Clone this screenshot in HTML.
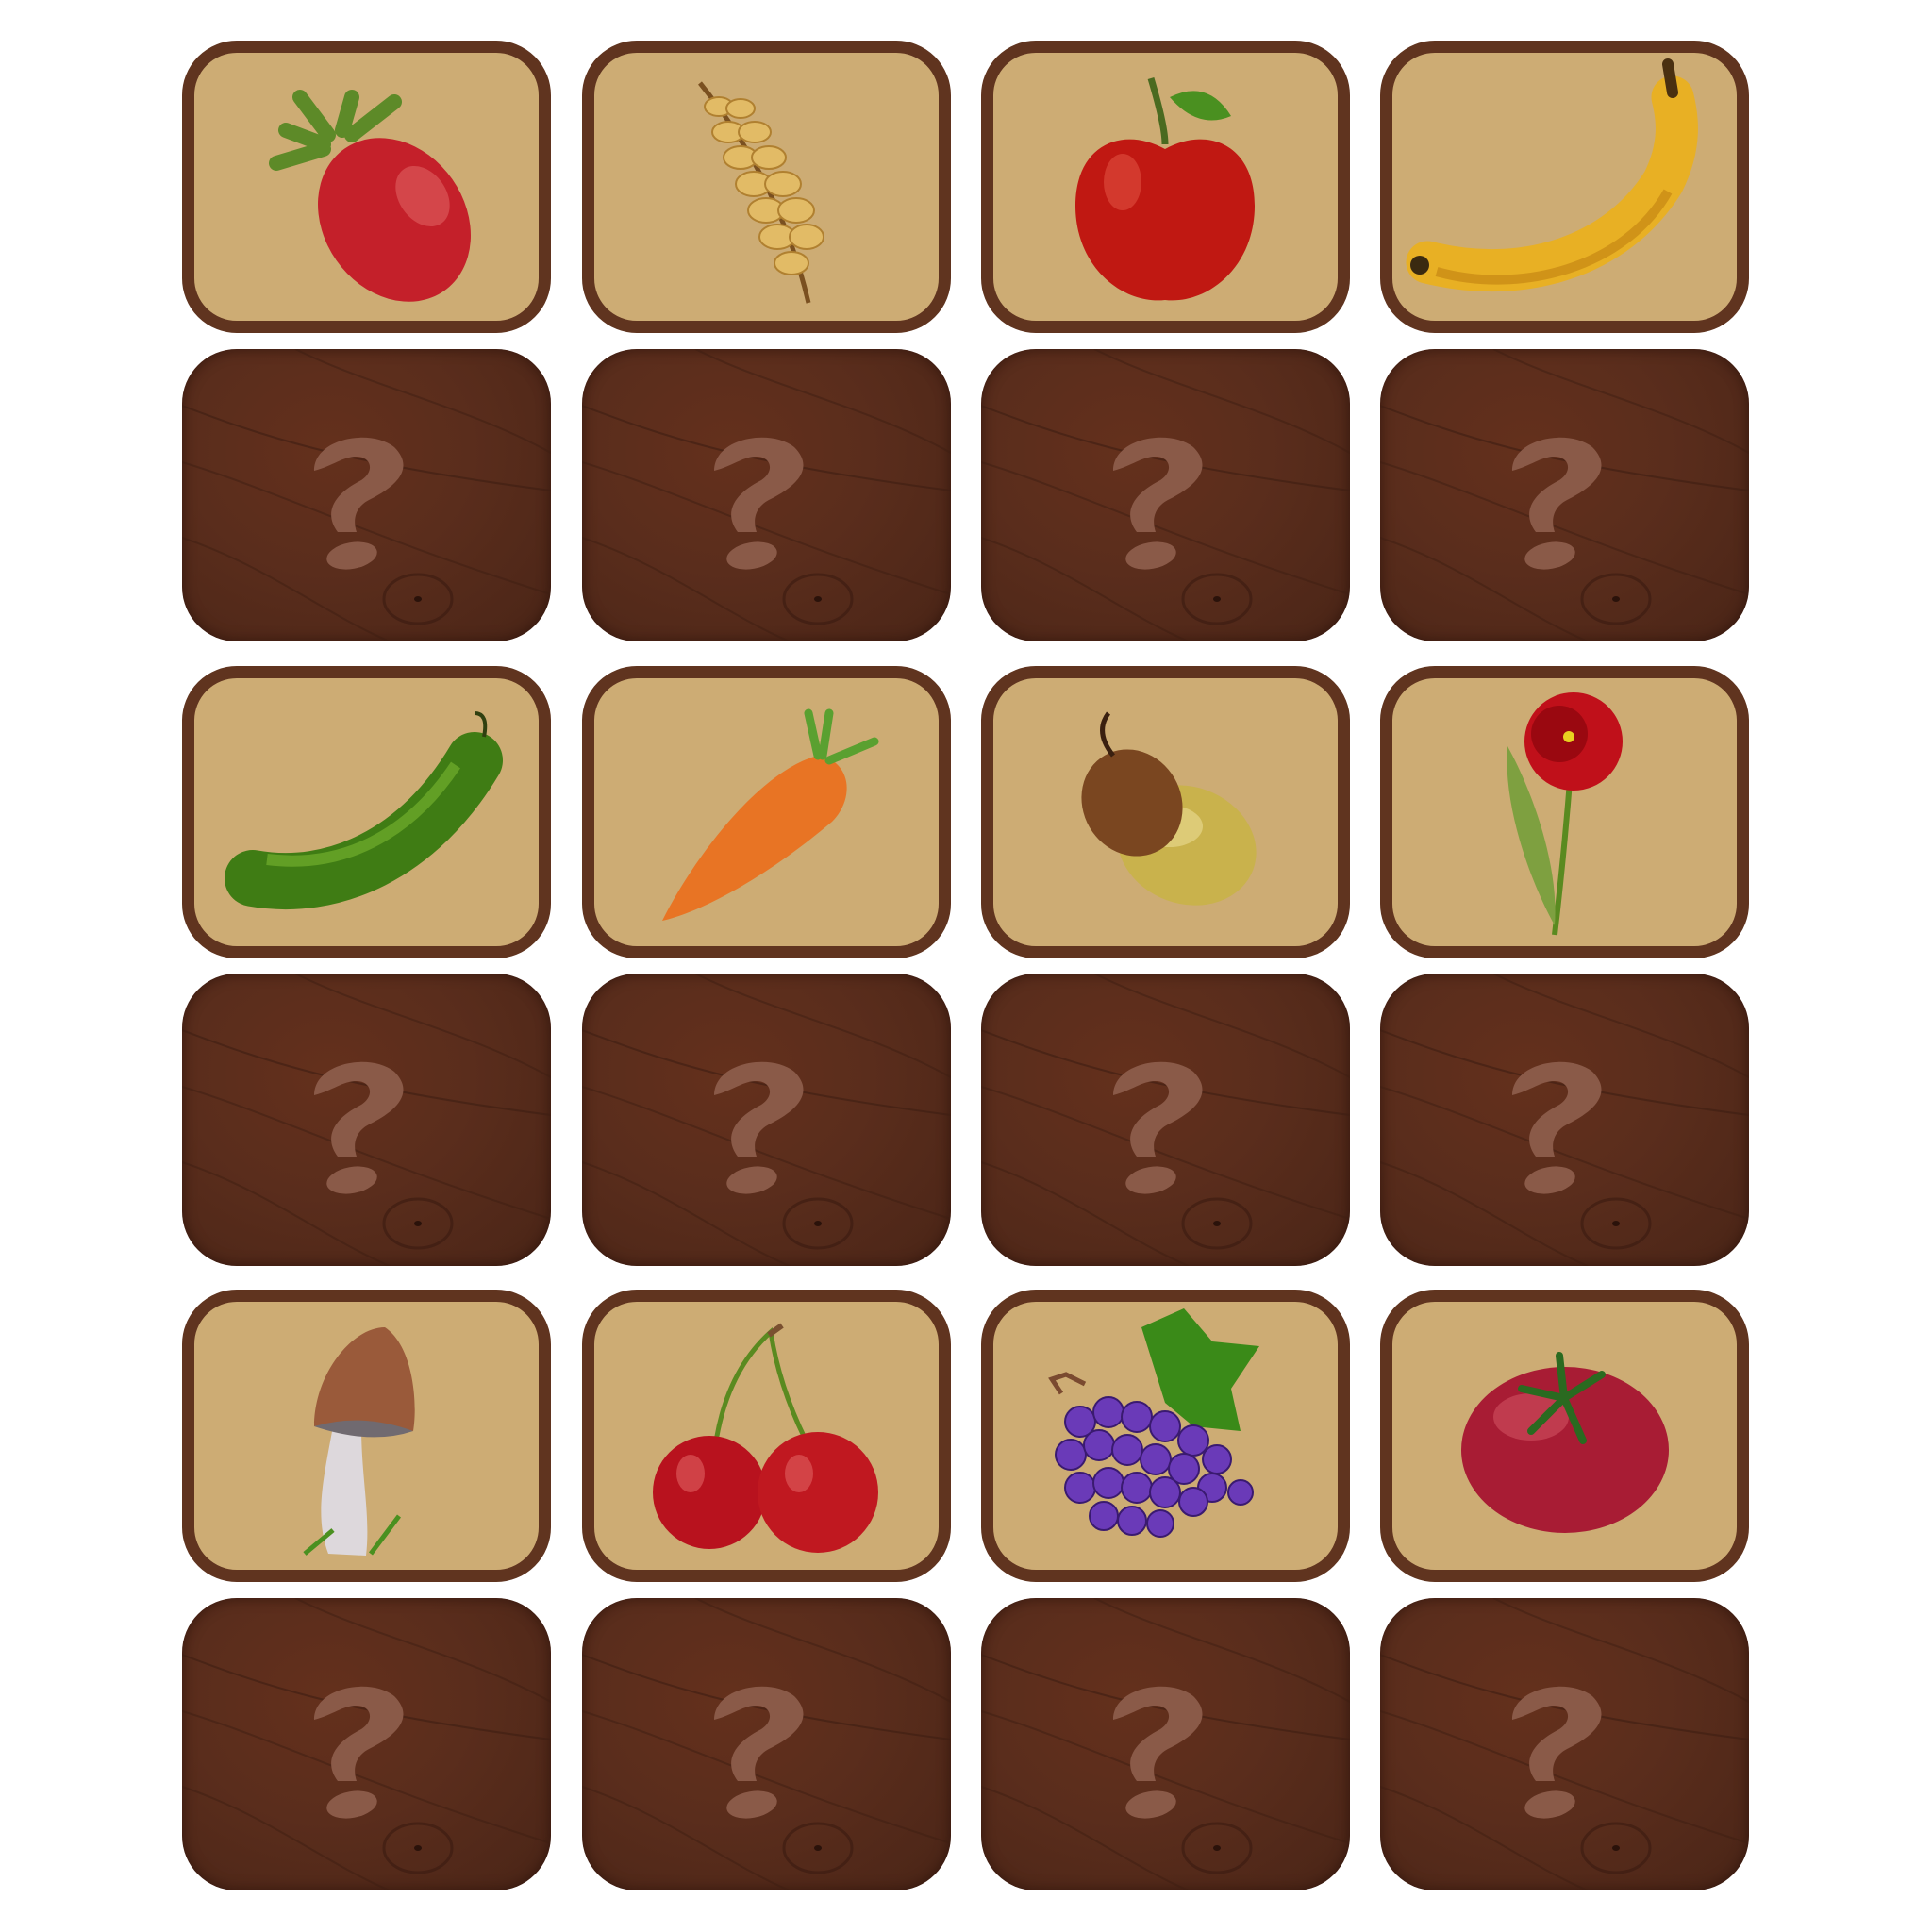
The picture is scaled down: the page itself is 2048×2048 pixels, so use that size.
<!DOCTYPE html>
<html><head><meta charset="utf-8"><style>
body{margin:0;width:2048px;height:2048px;background:#fff;position:relative;overflow:hidden;font-family:"Liberation Serif",serif}
.c{position:absolute;width:391px;height:310px;box-sizing:border-box;border-radius:58px}
.f{background:#cdac74;border:13px solid #60341f}
.f svg{position:absolute;left:-13px;top:-13px}
.b{background:radial-gradient(ellipse at 40% 35%,#64301c 0%,#5a2d1c 45%,#4a2517 100%);box-shadow:inset 0 0 14px rgba(30,10,5,.6);overflow:hidden}
.b svg{position:absolute;left:0;top:0}
</style></head><body>
<svg width="0" height="0" style="position:absolute"><defs>
<g id="back">
<path d="M0 60 C80 90 160 120 391 150" stroke="#3e1e12" stroke-width="2" fill="none" opacity=".6"/>
<path d="M0 120 C100 150 200 200 391 260" stroke="#3e1e12" stroke-width="2" fill="none" opacity=".5"/>
<path d="M120 0 C200 40 300 60 391 110" stroke="#3e1e12" stroke-width="2" fill="none" opacity=".5"/>
<path d="M0 200 C90 230 150 280 220 310" stroke="#3e1e12" stroke-width="2" fill="none" opacity=".5"/>
<ellipse cx="250" cy="265" rx="36" ry="26" fill="none" stroke="#3a1b10" stroke-width="3" opacity=".6"/>
<ellipse cx="250" cy="265" rx="4" ry="3" fill="#2a120a"/>
<g transform="translate(0,14)">
<path d="M140 115 C140 80 200 70 225 90 C250 115 220 135 200 145 C185 152 180 165 185 180 L165 180 C150 160 160 140 190 125 C205 115 200 100 185 100 C170 100 160 110 140 115Z" fill="#8a5a48"/>
<ellipse cx="180" cy="205" rx="27" ry="14" transform="rotate(-10 180 205)" fill="#8a5a48"/>
</g>
</g></defs></svg>

<!-- Row 1 -->
<div class="c f" style="left:193px;top:43px"><svg width="391" height="310">
<path d="M150 110 L110 95 M155 100 L125 60 M170 95 L180 60 M180 100 L225 65 M150 115 L100 130" stroke="#5d8a28" stroke-width="16" stroke-linecap="round"/>
<ellipse cx="225" cy="190" rx="75" ry="92" transform="rotate(-35 225 190)" fill="#c4202a"/>
<ellipse cx="255" cy="165" rx="25" ry="35" transform="rotate(-35 255 165)" fill="#e06060" opacity=".6"/>
</svg></div>
<div class="c f" style="left:617px;top:43px"><svg width="391" height="310">
<path d="M125 45 Q210 150 240 278" stroke="#7a5020" stroke-width="5" fill="none"/>
<g fill="#e2bb66" stroke="#b08030" stroke-width="2">
<ellipse cx="145" cy="70" rx="15" ry="10"/><ellipse cx="168" cy="72" rx="15" ry="10"/>
<ellipse cx="155" cy="97" rx="17" ry="11"/><ellipse cx="183" cy="97" rx="17" ry="11"/>
<ellipse cx="168" cy="124" rx="18" ry="12"/><ellipse cx="198" cy="124" rx="18" ry="12"/>
<ellipse cx="182" cy="152" rx="19" ry="13"/><ellipse cx="213" cy="152" rx="19" ry="13"/>
<ellipse cx="195" cy="180" rx="19" ry="13"/><ellipse cx="227" cy="180" rx="19" ry="13"/>
<ellipse cx="207" cy="208" rx="19" ry="13"/><ellipse cx="238" cy="208" rx="18" ry="13"/>
<ellipse cx="222" cy="236" rx="18" ry="12"/></g></svg></div>
<div class="c f" style="left:1040px;top:43px"><svg width="391" height="310">
<path d="M180 40 Q195 90 195 110 " stroke="#4a6a20" stroke-width="7" fill="none"/>
<path d="M200 60 Q240 40 265 80 Q230 95 200 60Z" fill="#4a9020"/>
<path d="M195 115 C150 90 100 110 100 175 C100 240 150 280 195 275 C240 280 290 240 290 175 C290 110 240 90 195 115Z" fill="#c01812"/>
<ellipse cx="150" cy="150" rx="20" ry="30" fill="#e05040" opacity=".6"/></svg></div>
<div class="c f" style="left:1463px;top:43px"><svg width="391" height="310">
<path d="M50 235 C150 260 250 230 300 150 C320 110 315 80 310 60" stroke="#e8b024" stroke-width="45" fill="none" stroke-linecap="round"/>
<path d="M60 245 C150 270 260 240 305 160" stroke="#c08010" stroke-width="10" fill="none" opacity=".6"/>
<path d="M310 55 L305 25" stroke="#4a3010" stroke-width="12" stroke-linecap="round"/>
<circle cx="42" cy="238" r="10" fill="#3a2a10"/></svg></div>

<!-- Row 2 backs -->
<div class="c b" style="left:193px;top:370px"><svg width="391" height="310"><use href="#back"/></svg></div>
<div class="c b" style="left:617px;top:370px"><svg width="391" height="310"><use href="#back"/></svg></div>
<div class="c b" style="left:1040px;top:370px"><svg width="391" height="310"><use href="#back"/></svg></div>
<div class="c b" style="left:1463px;top:370px"><svg width="391" height="310"><use href="#back"/></svg></div>

<!-- Row 3 -->
<div class="c f" style="left:193px;top:706px"><svg width="391" height="310">
<path d="M75 225 C160 240 250 200 310 100" stroke="#3f7c14" stroke-width="60" fill="none" stroke-linecap="round"/>
<path d="M90 205 C170 215 240 180 290 105" stroke="#7ab830" stroke-width="12" fill="none" opacity=".6"/>
<path d="M320 75 Q325 50 310 50" stroke="#304010" stroke-width="4" fill="none"/></svg></div>
<div class="c f" style="left:617px;top:706px"><svg width="391" height="310">
<path d="M85 270 C120 200 190 110 250 95 C285 100 290 140 265 165 C200 220 130 260 85 270Z" fill="#e87424"/>
<path d="M250 95 L240 50 M255 95 L262 50 M262 100 L310 80" stroke="#5aa030" stroke-width="9" stroke-linecap="round"/></svg></div>
<div class="c f" style="left:1040px;top:706px"><svg width="391" height="310">
<ellipse cx="218" cy="190" rx="75" ry="62" transform="rotate(20 218 190)" fill="#c9b24c"/>
<ellipse cx="200" cy="170" rx="35" ry="22" fill="#e6d68a" opacity=".7"/>
<ellipse cx="160" cy="145" rx="52" ry="58" transform="rotate(-30 160 145)" fill="#7a4620"/>
<path d="M140 95 Q120 70 135 50" stroke="#3a2010" stroke-width="5" fill="none"/></svg></div>
<div class="c f" style="left:1463px;top:706px"><svg width="391" height="310">
<path d="M202 110 Q195 200 185 285" stroke="#5a8a20" stroke-width="6" fill="none"/>
<path d="M135 85 C130 150 160 230 185 275 C190 210 160 130 135 85Z" fill="#7ea040"/>
<circle cx="205" cy="80" r="52" fill="#c0101a"/><circle cx="190" cy="72" r="30" fill="#9a0810"/>
<circle cx="200" cy="75" r="6" fill="#e8d020"/></svg></div>

<!-- Row 4 backs -->
<div class="c b" style="left:193px;top:1032px"><svg width="391" height="310"><use href="#back"/></svg></div>
<div class="c b" style="left:617px;top:1032px"><svg width="391" height="310"><use href="#back"/></svg></div>
<div class="c b" style="left:1040px;top:1032px"><svg width="391" height="310"><use href="#back"/></svg></div>
<div class="c b" style="left:1463px;top:1032px"><svg width="391" height="310"><use href="#back"/></svg></div>

<!-- Row 5 -->
<div class="c f" style="left:193px;top:1367px"><svg width="391" height="310">
<path d="M160 145 C150 200 140 240 155 280 L195 282 C200 240 190 200 190 145Z" fill="#ddd8dc"/>
<path d="M140 145 C140 90 180 40 215 40 C245 60 250 120 245 150 C210 140 170 140 140 145Z" fill="#9a5a3a"/>
<path d="M140 145 Q190 130 245 150 Q200 165 140 145Z" fill="#706a70"/>
<path d="M130 280 L160 255 M200 280 L230 240" stroke="#4a9020" stroke-width="5"/></svg></div>
<div class="c f" style="left:617px;top:1367px"><svg width="391" height="310">
<path d="M140 175 Q150 90 200 45 Q210 110 245 175" stroke="#5a8a20" stroke-width="5" fill="none"/>
<path d="M198 48 L212 38" stroke="#7a5030" stroke-width="6"/>
<circle cx="135" cy="215" r="60" fill="#b8121e"/><circle cx="250" cy="215" r="64" fill="#c01820"/>
<ellipse cx="115" cy="195" rx="15" ry="20" fill="#e06060" opacity=".6"/><ellipse cx="230" cy="195" rx="15" ry="20" fill="#e06060" opacity=".6"/></svg></div>
<div class="c f" style="left:1040px;top:1367px"><svg width="391" height="310">
<path d="M170 40 L215 20 L245 55 L295 60 L265 105 L275 150 L225 145 L195 120 Z" fill="#3a8a18"/>
<g fill="#6a3ab8" stroke="#3a1a70" stroke-width="2">
<circle cx="105" cy="140" r="16"/><circle cx="135" cy="130" r="16"/><circle cx="165" cy="135" r="16"/>
<circle cx="195" cy="145" r="16"/><circle cx="225" cy="160" r="16"/><circle cx="250" cy="180" r="15"/>
<circle cx="95" cy="175" r="16"/><circle cx="125" cy="165" r="16"/><circle cx="155" cy="170" r="16"/>
<circle cx="185" cy="180" r="16"/><circle cx="215" cy="190" r="16"/><circle cx="245" cy="210" r="15"/><circle cx="275" cy="215" r="13"/>
<circle cx="105" cy="210" r="16"/><circle cx="135" cy="205" r="16"/><circle cx="165" cy="210" r="16"/>
<circle cx="195" cy="215" r="16"/><circle cx="225" cy="225" r="15"/><circle cx="130" cy="240" r="15"/><circle cx="160" cy="245" r="15"/><circle cx="190" cy="248" r="14"/></g>
<path d="M85 110 L75 95 L90 90 L110 100" stroke="#7a4a30" stroke-width="5" fill="none"/></svg></div>
<div class="c f" style="left:1463px;top:1367px"><svg width="391" height="310">
<ellipse cx="196" cy="170" rx="110" ry="88" fill="#a81c34"/>
<ellipse cx="160" cy="135" rx="40" ry="25" fill="#d05060" opacity=".6"/>
<path d="M150 105 L195 115 L235 90 M195 115 L215 160 M195 115 L160 150 M195 115 L190 70" stroke="#2a6a20" stroke-width="8" stroke-linecap="round" fill="none"/></svg></div>

<!-- Row 6 backs -->
<div class="c b" style="left:193px;top:1694px"><svg width="391" height="310"><use href="#back"/></svg></div>
<div class="c b" style="left:617px;top:1694px"><svg width="391" height="310"><use href="#back"/></svg></div>
<div class="c b" style="left:1040px;top:1694px"><svg width="391" height="310"><use href="#back"/></svg></div>
<div class="c b" style="left:1463px;top:1694px"><svg width="391" height="310"><use href="#back"/></svg></div>
</body></html>
